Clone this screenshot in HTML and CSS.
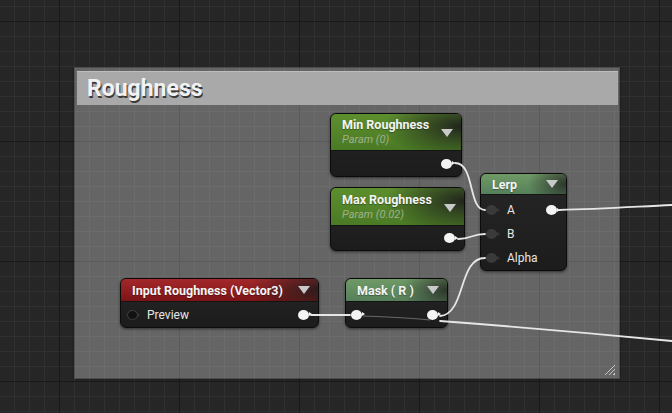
FILE: index.html
```html
<!DOCTYPE html>
<html>
<head>
<meta charset="utf-8">
<link rel="stylesheet" href="styles.css">
</head>
<body>
<div class="graph">
  <div class="comment">
    <div class="comment-head">Roughness</div>
    <div class="grip"></div>
  </div>

  <div class="node param node-min">
    <div class="head head-param">
      <div class="titles"><span class="title">Min Roughness</span><span class="sub">Param (0)</span></div>
      <span class="caret"></span>
    </div>
    <div class="body"><div class="row out-only"><span class="pin out"></span></div></div>
  </div>

  <div class="node param node-max">
    <div class="head head-param">
      <div class="titles"><span class="title">Max Roughness</span><span class="sub">Param (0.02)</span></div>
      <span class="caret"></span>
    </div>
    <div class="body"><div class="row out-only"><span class="pin out"></span></div></div>
  </div>

  <div class="node node-lerp">
    <div class="head head-func"><span class="title">Lerp</span><span class="caret"></span></div>
    <div class="body lerp-body">
      <div class="row"><span class="pin in"></span><span class="label">A</span><span class="pin out"></span></div>
      <div class="row"><span class="pin in"></span><span class="label">B</span></div>
      <div class="row"><span class="pin in"></span><span class="label">Alpha</span></div>
    </div>
  </div>

  <div class="node node-input">
    <div class="head head-red"><span class="title">Input Roughness (Vector3)</span><span class="caret"></span></div>
    <div class="body"><div class="row"><span class="pin hollow"></span><span class="label">Preview</span><span class="pin out"></span></div></div>
  </div>

  <div class="node node-mask">
    <div class="head head-func"><span class="title">Mask ( R )</span><span class="caret"></span></div>
    <div class="body"><div class="row"><span class="pin out-white"></span><span class="spacer"></span><span class="pin out"></span></div></div>
  </div>

  <svg class="wires" width="672" height="413" viewBox="0 0 672 413">
    <g fill="none" stroke="#e6e6e6" stroke-width="1.8" stroke-linecap="round">
      <path d="M455,163 C475,163 468,210 485,210"/>
      <path d="M458,239 C471,239 472,234 485,234"/>
      <path d="M440,316 C466,314 458,258 485,258"/>
      <path d="M559,210 C600,209 630,207 672,205"/>
      <path d="M311,315 C330,315 335,315 350,315"/>
      <path d="M440,321 C520,327 600,334 672,341"/>
    </g>
    <path d="M363,316 C390,317 410,318 430,320" fill="none" stroke="#9a9a9a" stroke-width="1" opacity="0.6"/>
  </svg>
</div>
</body>
</html>
```
FILE: styles.css
```css
html, body {
  margin: 0;
  padding: 0;
}
body {
  width: 672px;
  height: 413px;
  overflow: hidden;
  font-family: Roboto, "Liberation Sans", sans-serif;
  background-color: #262626;
}
.graph {
  position: relative;
  width: 672px;
  height: 413px;
  background-color: #262626;
  background-image:
    linear-gradient(to right, #191919 1px, transparent 1px),
    linear-gradient(to bottom, #191919 1px, transparent 1px),
    linear-gradient(to right, #303030 1px, transparent 1px),
    linear-gradient(to bottom, #303030 1px, transparent 1px);
  background-size: 120px 120px, 120px 120px, 15px 15px, 15px 15px;
  background-position: 59px 0, 0 21px, 14px 0, 0 6px;
}
.comment {
  position: absolute;
  left: 74px;
  top: 67px;
  width: 546px;
  height: 312px;
  box-sizing: border-box;
  background: rgba(255, 255, 255, 0.29);
  border: 1px solid rgba(0, 0, 0, 0.25);
  box-shadow: 0 0 2px rgba(0, 0, 0, 0.4);
  padding: 3px 1px 0 2px;
}
.comment-head {
  height: 34px;
  background: #a9a9a9;
  border-top: 1px solid #bdbdbd;
  box-sizing: border-box;
  padding-left: 10px;
  color: #f2f2f2;
  font-weight: 700;
  font-size: 23px;
  line-height: 34px;
  text-shadow: 1px 2px 0 #3a3a3a;
}
.grip {
  position: absolute;
  right: 4px;
  bottom: 3px;
  width: 11px;
  height: 11px;
  background: repeating-linear-gradient(135deg, transparent 0 2px, #c8c8c8 2px 3px);
  clip-path: polygon(100% 0, 100% 100%, 0 100%);
}
.node {
  position: absolute;
  box-sizing: border-box;
  border: 1px solid #0b0b0b;
  border-radius: 6px;
  background: linear-gradient(to bottom, #262626, #1c1c1c);
  box-shadow: 0 1px 3px rgba(0, 0, 0, 0.55);
  overflow: hidden;
  display: flex;
  flex-direction: column;
  color: #e8e8e8;
}
.head {
  display: flex;
  align-items: center;
  justify-content: space-between;
  padding: 0 8px 0 11px;
  box-sizing: border-box;
  border-bottom: 1px solid #141414;
}
.title {
  font-weight: 700;
  font-size: 12.5px;
  color: #f4f4f4;
  line-height: 15px;
  text-shadow: 0 1px 1px rgba(0, 0, 0, 0.35);
}
.titles {
  display: flex;
  flex-direction: column;
}
.sub {
  font-style: italic;
  font-size: 11px;
  color: #9fb08e;
  line-height: 15px;
}
.caret {
  width: 0;
  height: 0;
  border-left: 6px solid transparent;
  border-right: 6px solid transparent;
  border-top: 8px solid #c9c9c9;
  align-self: center;
}
.head-param {
  height: 37px;
  background:
    radial-gradient(ellipse 60% 90% at 100% 35%, rgba(30, 32, 28, 0.95), rgba(30, 32, 28, 0) 100%),
    linear-gradient(to bottom, #5d8f2e, #4a7a24);
}
.head-param .caret { margin-top: 2px; }
.head-func {
  height: 23px;
  background:
    radial-gradient(ellipse 45% 120% at 100% 50%, rgba(40, 44, 38, 0.9), rgba(40, 44, 38, 0) 100%),
    linear-gradient(to bottom, #6f9a66, #56805a);
}
.head-red {
  height: 23px;
  background:
    radial-gradient(ellipse 35% 130% at 100% 50%, rgba(40, 28, 28, 0.95), rgba(40, 28, 28, 0) 100%),
    linear-gradient(to bottom, #a3282a, #7e1416);
}
.body {
  flex: 1;
  display: flex;
  flex-direction: column;
  justify-content: center;
  padding: 0 6px 0 6px;
}
.row {
  display: flex;
  align-items: center;
  height: 24px;
}
.out-only {
  justify-content: flex-end;
}
.label {
  font-size: 12px;
  color: #e6e6e6;
  margin-left: 5px;
  flex: 1;
}
.spacer { flex: 1; }
.pin {
  position: relative;
  width: 11px;
  height: 10px;
  border-radius: 50%;
  flex: none;
}
.pin::after {
  content: "";
  position: absolute;
  right: -3px;
  top: 2.5px;
  border-top: 2.5px solid transparent;
  border-bottom: 2.5px solid transparent;
  border-left: 3px solid currentColor;
}
.pin.out, .pin.out-white {
  background: #f4f4f4;
  color: #f4f4f4;
  margin-right: 3px;
}
.pin.in {
  background: #3a3a3a;
  color: #3a3a3a;
}
.pin.hollow {
  box-sizing: border-box;
  background: #111;
  border: 1.5px solid #3c3c3c;
  color: #3a3a3a;
}
.node-min { left: 330px; top: 113px; width: 132px; height: 64px; }
.node-max { left: 330px; top: 187px; width: 135px; height: 64px; }
.node-max .head-param { height: 38px; }
.node-lerp { left: 480px; top: 173px; width: 87px; height: 98px; }
.node-lerp .head { height: 22px; }
.lerp-body { justify-content: flex-start; padding-top: 3px; padding-left: 5px; }
.node-lerp .label { margin-left: 10px; }
.node-input { left: 120px; top: 278px; width: 199px; height: 50px; }
.node-input .label { margin-left: 9px; }
.node-mask { left: 345px; top: 278px; width: 103px; height: 50px; }
.node-mask .body { padding-left: 5px; }
.wires {
  position: absolute;
  left: 0;
  top: 0;
  pointer-events: none;
}
```
